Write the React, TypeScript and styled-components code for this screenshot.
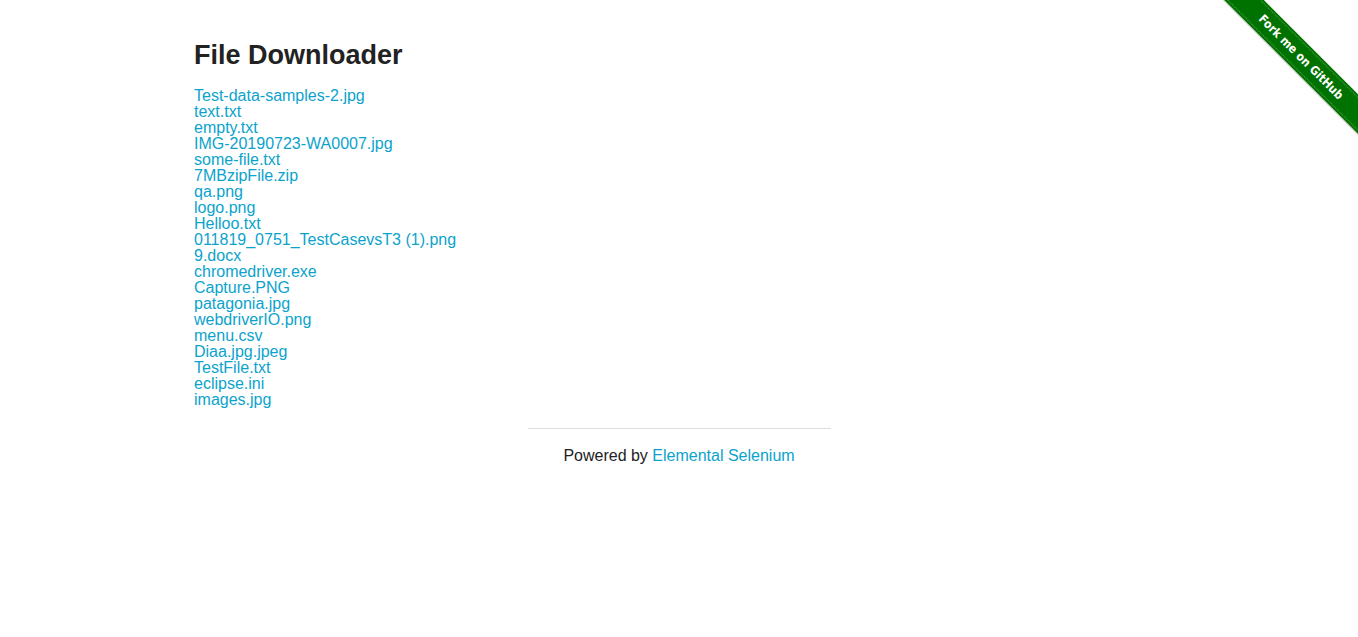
import React from 'react'
import styled, { createGlobalStyle } from 'styled-components'

const files = [
  'Test-data-samples-2.jpg',
  'text.txt',
  'empty.txt',
  'IMG-20190723-WA0007.jpg',
  'some-file.txt',
  '7MBzipFile.zip',
  'qa.png',
  'logo.png',
  'Helloo.txt',
  '011819_0751_TestCasevsT3 (1).png',
  '9.docx',
  'chromedriver.exe',
  'Capture.PNG',
  'patagonia.jpg',
  'webdriverIO.png',
  'menu.csv',
  'Diaa.jpg.jpeg',
  'TestFile.txt',
  'eclipse.ini',
  'images.jpg',
]

const App = () => {
  return (
    <>
      <GlobalStyle />
      <Page>
        <Row>
          <Content>
            <Title>File Downloader</Title>
            <FileList>
              {files.map((name) => (
                <FileLink key={name} href={`download/${name}`}>
                  {name}
                </FileLink>
              ))}
            </FileList>
          </Content>
        </Row>

        <Footer>
          <Rule />
          <Powered>
            Powered by <FooterLink href="#">Elemental Selenium</FooterLink>
          </Powered>
        </Footer>

        <Ribbon>
          <RibbonBand>
            <RibbonText>Fork me on GitHub</RibbonText>
          </RibbonBand>
        </Ribbon>
      </Page>
    </>
  )
}

export default App

// Styled Components

const GlobalStyle = createGlobalStyle`
  html, body {
    margin: 0;
    padding: 0;
    background: #fff;
  }

  body {
    font-family: 'Liberation Sans', Helvetica, Arial, sans-serif;
    font-size: 16px;
    line-height: 1;
    color: #222;
  }
`

const Page = styled.div`
  position: relative;
  width: 100%;
  min-height: 637px;
  padding-top: 32px;
  box-sizing: border-box;
`

const Row = styled.div`
  max-width: 1000px;
  margin: 0 auto;
`

const Content = styled.div`
  padding: 0 15px;
`

const Title = styled.h3`
  margin: 5px 0 13px;
  font-size: 27px;
  font-weight: bold;
  line-height: 1.4;
  color: #222;
`

const FileList = styled.div`
  display: flex;
  flex-direction: column;
  align-items: flex-start;
`

const FileLink = styled.a`
  display: block;
  font-size: 16px;
  line-height: 16px;
  color: #0ba3cc;
  text-decoration: none;
`

const Footer = styled.div`
  width: 303px;
  margin: 0 auto;
  text-align: center;
`

const Rule = styled.hr`
  margin: 20px 0 19px;
  border: solid #ddd;
  border-width: 1px 0 0;
  height: 0;
`

const Powered = styled.div`
  font-size: 16px;
  line-height: 16px;
  color: #222;
`

const FooterLink = styled.a`
  color: #0ba3cc;
  text-decoration: none;
`

const Ribbon = styled.div`
  position: absolute;
  top: 0;
  right: 0;
  width: 149px;
  height: 149px;
  overflow: hidden;
`

const RibbonBand = styled.div`
  position: absolute;
  left: -19px;
  top: 43px;
  width: 222px;
  height: 28px;
  background: #007200;
  transform: rotate(45deg);
  display: flex;
  align-items: center;
  justify-content: center;
  box-shadow: 0 1px 1px rgba(0, 0, 0, 0.2);

  &::before,
  &::after {
    content: '';
    position: absolute;
    left: 0;
    right: 0;
    height: 0;
    border-top: 1px dotted rgba(255, 255, 255, 0.35);
  }

  &::before {
    top: 2px;
  }

  &::after {
    bottom: 2px;
  }
`

const RibbonText = styled.span`
  font-family: 'Liberation Sans Narrow', 'DejaVu Sans Condensed', 'DejaVu Sans', sans-serif;
  font-stretch: condensed;
  font-size: 12px;
  font-weight: bold;
  color: #fff;
`
